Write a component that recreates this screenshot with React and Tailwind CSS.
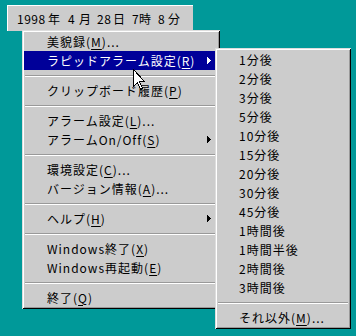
import React from "react";

const mainItems = [
  { label: "美貌録", key: "M", suffix: "..." },
  { label: "ラピッドアラーム設定", key: "R", arrow: true, active: true },
  "sep",
  { label: "クリップボード履歴", key: "P" },
  "sep",
  { label: "アラーム設定", key: "L", suffix: "..." },
  { label: "アラームOn/Off", key: "S", arrow: true },
  "sep",
  { label: "環境設定", key: "C", suffix: "..." },
  { label: "バージョン情報", key: "A", suffix: "..." },
  "sep",
  { label: "ヘルプ", key: "H", arrow: true },
  "sep",
  { label: "Windows終了", key: "X" },
  { label: "Windows再起動", key: "E" },
  "sep",
  { label: "終了", key: "Q" },
];

const subItems = [
  { label: "1分後" },
  { label: "2分後" },
  { label: "3分後" },
  { label: "5分後" },
  { label: "10分後" },
  { label: "15分後" },
  { label: "20分後" },
  { label: "30分後" },
  { label: "45分後" },
  { label: "1時間後" },
  { label: "1時間半後" },
  { label: "2時間後" },
  { label: "3時間後" },
  "sep",
  { label: "それ以外", key: "M", suffix: "..." },
];

function Arrow() {
  return (
    <svg width="4" height="7" viewBox="0 0 4 7" shapeRendering="crispEdges" fill="currentColor">
      <path d="M0 0h1v7h-1z M1 1h1v5h-1z M2 2h1v3h-1z M3 3h1v1h-1z" />
    </svg>
  );
}

function Sep() {
  return (
    <div className="h-[11px] pt-[5px] mx-[1px]">
      <div className="h-px bg-[#999999]" />
      <div className="h-px bg-white" />
    </div>
  );
}

function Item({ item, pad }) {
  return (
    <div
      className={`h-[19px] flex items-center justify-between pr-[7px] ${pad} ${
        item.active ? "bg-[#000099] text-white" : "text-black"
      }`}
    >
      <span className="whitespace-nowrap tracking-[1px]">
        {item.label}
        {item.key && (
          <>
            (<span className="underline underline-offset-2">{item.key}</span>)
          </>
        )}
        {item.suffix}
      </span>
      {item.arrow && <Arrow />}
    </div>
  );
}

function Cursor() {
  return (
    <svg
      className="absolute left-[133px] top-[69px]"
      width="13"
      height="22"
      viewBox="0 0 13 22"
      shapeRendering="crispEdges"
    >
      <path
        d="M0.5 0.5 V17.5 L4.5 13.5 L7.5 20.5 L9.5 19.5 L6.5 12.5 H11.5 Z"
        fill="white"
        stroke="black"
        strokeWidth="1"
      />
    </svg>
  );
}

const dateParts = [
  ["1998", "w-[31px]"],
  ["年", "w-[20px]"],
  ["4", "w-[11px]"],
  ["月", "w-[18px]"],
  ["28", "w-[16px]"],
  ["日", "w-[19px]"],
  ["7", "w-[7px]"],
  ["時", "w-[19px]"],
  ["8", "w-[10px]"],
  ["分", "w-[14px]"],
];

export default function App() {
  return (
    <div className="relative w-[356px] h-[336px] overflow-hidden bg-[#009999] font-['Noto_Sans_CJK_JP',sans-serif] text-[12px] leading-none">
      <div className="ml-[7px] mt-[5px] w-[186px] h-[26px] bg-[#cccccc] border-t border-l border-white flex items-center pl-[9px] text-black">
        {dateParts.map(([t, w], i) => (
          <span key={i} className={`inline-block ${w} tracking-[0.5px]`}>
            {t}
          </span>
        ))}
      </div>

      <div className="absolute left-[22px] top-[30px] w-[198px] p-[2px] bg-[#cccccc] flex flex-col shadow-[inset_1px_1px_0_#dddddd,inset_-1px_-1px_0_#000000,inset_2px_2px_0_#ffffff,inset_-2px_-2px_0_#999999]">
        {mainItems.map((it, i) =>
          it === "sep" ? <Sep key={i} /> : <Item key={i} item={it} pad="pl-[23px]" />
        )}
      </div>

      <div className="absolute left-[215px] top-[48px] w-[136px] p-[2px] bg-[#cccccc] flex flex-col shadow-[inset_1px_1px_0_#dddddd,inset_-1px_-1px_0_#000000,inset_2px_2px_0_#ffffff,inset_-2px_-2px_0_#999999]">
        {subItems.map((it, i) =>
          it === "sep" ? <Sep key={i} /> : <Item key={i} item={it} pad="pl-[22px]" />
        )}
      </div>

      <Cursor />
    </div>
  );
}
